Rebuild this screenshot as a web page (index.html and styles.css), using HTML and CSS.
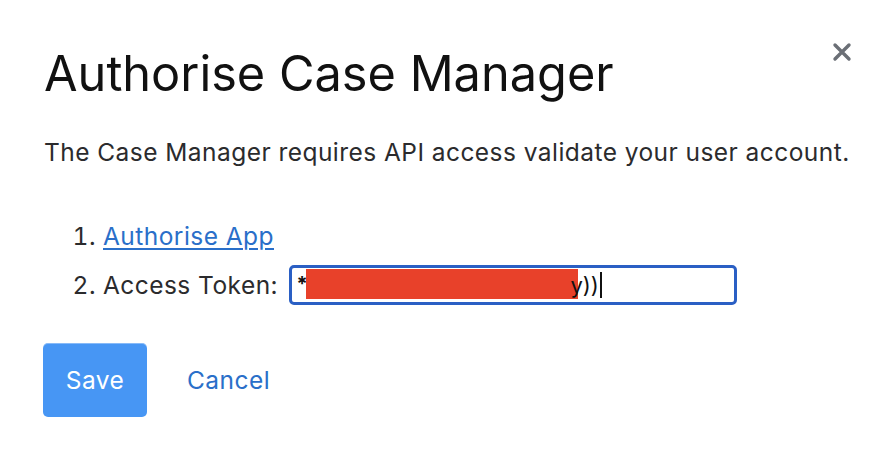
FILE: index.html
```html
<!DOCTYPE html>
<html>
<head>
<meta charset="utf-8">
<link rel="stylesheet" href="styles.css">
</head>
<body>
<div class="modal">
  <button class="close" aria-label="Close">
    <svg width="20" height="20" viewBox="0 0 20 20"><path d="M3 3L17 17M17 3L3 17" stroke="#6b6f76" stroke-width="3.4" stroke-linecap="round"/></svg>
  </button>
  <h1 class="title">Authorise Case Manager</h1>
  <p class="intro">The Case Manager requires API access validate your user account.</p>
  <ol class="steps">
    <li><a href="#" class="link">Authorise App</a></li>
    <li class="token-row">Access Token: <span class="input"><span class="star">*</span><span class="redact"></span><span class="tail">y))</span><span class="caret"></span></span></li>
  </ol>
  <div class="actions">
    <button class="save">Save</button>
    <a href="#" class="cancel">Cancel</a>
  </div>
</div>
</body>
</html>
```
FILE: styles.css
```css
html, body {
  margin: 0;
  background: #fff;
}
body {
  font-family: Inter, "Liberation Sans", Arial, sans-serif;
  color: #2b2b2d;
}
.modal {
  position: relative;
  padding: 44px 44px 0 44px;
  height: 464px;
  box-sizing: border-box;
}
.close {
  position: absolute;
  top: 42px;
  right: 42px;
  border: 0;
  background: none;
  padding: 0;
  width: 20px;
  height: 20px;
}
.close svg { display: block; }
.title {
  margin: 0;
  font-weight: 400;
  font-size: 48.7px;
  line-height: 60px;
  color: #111;
}
.intro {
  margin: 33px 0 0 0;
  font-size: 24.5px;
  letter-spacing: 0.45px;
  line-height: 30px;
}
.steps {
  margin: 55px 0 0 0;
  padding-left: 59px;
  font-size: 24.5px;
  letter-spacing: 0.45px;
  line-height: 28px;
}
.link {
  color: #2a6fc9;
  text-decoration: underline;
  text-underline-offset: 3px;
  text-decoration-thickness: 1.5px;
}
.token-row {
  margin-top: 17px;
}
.input {
  display: inline-flex;
  align-items: center;
  vertical-align: middle;
  width: 448px;
  height: 40px;
  box-sizing: border-box;
  border: 3px solid #2a5fc4;
  border-radius: 5px;
  margin-left: 4px;
  padding-left: 4px;
  position: relative;
  top: -2px;
  letter-spacing: 0;
}
.star {
  display: inline-block;
  width: 10px;
  font-weight: 700;
  color: #111;
  font-size: 20px;
  align-self: flex-start;
  margin-top: 2px;
}
.redact {
  display: inline-block;
  width: 272px;
  height: 30px;
  background: #e8412a;
  margin-top: 1px;
  align-self: flex-start;
}
.tail {
  font-size: 22px;
  color: #111;
  margin-left: -8px;
}
.caret {
  display: inline-block;
  width: 2px;
  height: 26px;
  background: #111;
  margin-left: 1px;
}
.actions {
  display: flex;
  align-items: center;
  margin-top: 36px;
  gap: 40px;
  margin-left: -1px;
}
.save {
  width: 104px;
  height: 74px;
  border: 0;
  border-radius: 5px;
  background: #4796f4;
  color: #fff;
  font-family: Inter, "Liberation Sans", Arial, sans-serif;
  font-size: 24.5px;
  letter-spacing: 0.45px;
  box-shadow: inset 0 1px 0 rgba(255,255,255,0.35);
}
.cancel {
  color: #2a6fc9;
  font-size: 24.5px;
  letter-spacing: 0.45px;
  text-decoration: none;
}
```
